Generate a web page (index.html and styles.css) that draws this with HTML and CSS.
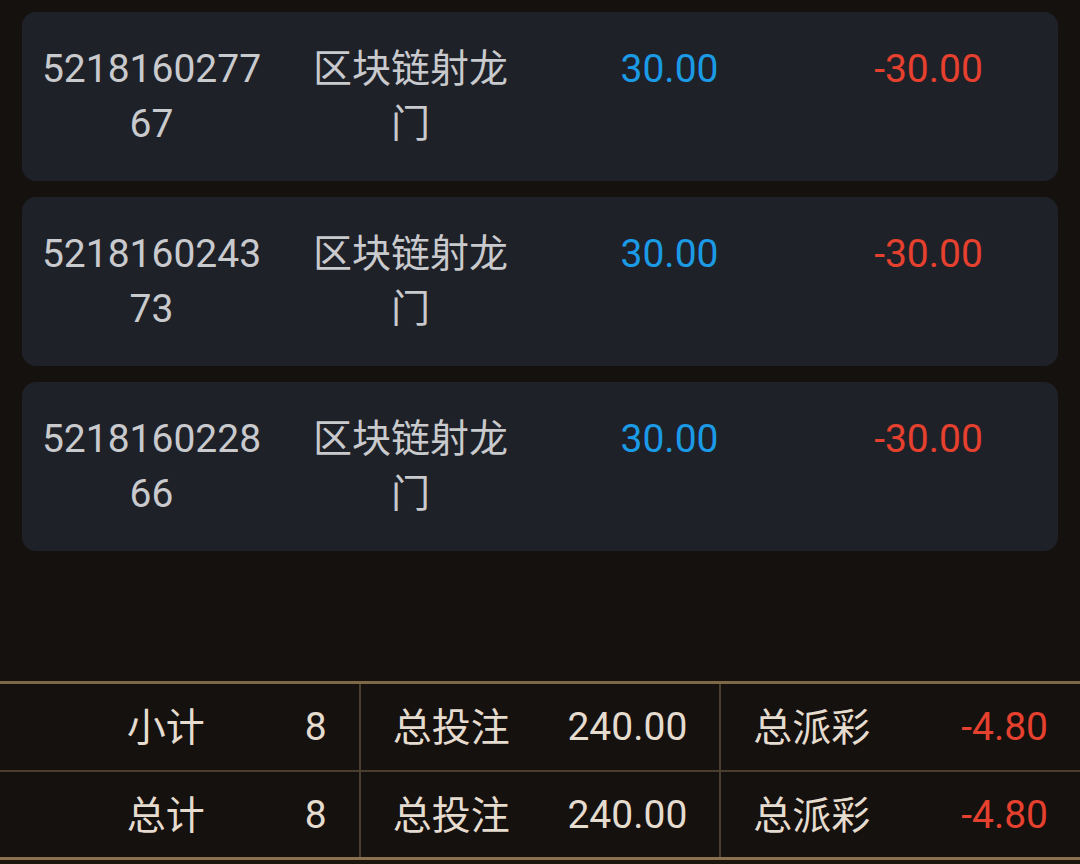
FILE: index.html
```html
<!DOCTYPE html>
<html lang="zh-CN">
<head>
<meta charset="utf-8">
<link rel="stylesheet" href="styles.css">
</head>
<body>
<div class="page">
  <div class="list">
    <div class="card">
      <div class="cell">521816027767</div>
      <div class="cell">区块链射龙门</div>
      <div class="cell blue">30.00</div>
      <div class="cell red">-30.00</div>
    </div>
    <div class="card">
      <div class="cell">521816024373</div>
      <div class="cell">区块链射龙门</div>
      <div class="cell blue">30.00</div>
      <div class="cell red">-30.00</div>
    </div>
    <div class="card">
      <div class="cell">521816022866</div>
      <div class="cell">区块链射龙门</div>
      <div class="cell blue">30.00</div>
      <div class="cell red">-30.00</div>
    </div>
  </div>
  <div class="footer">
    <div class="row">
      <div class="group first"><span class="label">小计</span><span>8</span></div>
      <div class="group"><span class="label">总投注</span><span>240.00</span></div>
      <div class="group"><span class="label">总派彩</span><span class="neg">-4.80</span></div>
    </div>
    <div class="row">
      <div class="group first"><span class="label">总计</span><span>8</span></div>
      <div class="group"><span class="label">总投注</span><span>240.00</span></div>
      <div class="group"><span class="label">总派彩</span><span class="neg">-4.80</span></div>
    </div>
  </div>
</div>
</body>
</html>
```
FILE: styles.css
```css
html, body {
  margin: 0;
  padding: 0;
  background: #15110e;
}
body {
  font-family: Roboto, "Noto Sans CJK SC", sans-serif;
  font-size: 39px;
}
.page {
  height: 864px;
  display: flex;
  flex-direction: column;
  box-sizing: border-box;
  padding-bottom: 4px;
  background: #1d150c;
}
.list {
  background: #15110e;
  flex: 1;
  padding: 12px 22px 0;
  display: flex;
  flex-direction: column;
  gap: 16px;
}
.card {
  background: #1f2128;
  border-radius: 14px;
  display: grid;
  grid-template-columns: repeat(4, 1fr);
  padding: 30px 0 29px;
  height: 110px;
}
.cell {
  padding: 0 16px;
  text-align: center;
  line-height: 55px;
  color: #c9cacd;
  word-break: break-all;
}
.cell.blue { color: #1b9ae6; }
.cell.red { color: #e6402e; }
.footer {
  background: #15110e;
  border-top: 3px solid #7f6846;
  border-bottom: 3px solid #8b7150;
}
.row {
  display: flex;
  height: 86px;
}
.row + .row {
  border-top: 2px solid #4a3e2e;
  height: 85px;
}
.group {
  flex: 1;
  display: flex;
  align-items: center;
  justify-content: space-between;
  padding: 0 32px;
  color: #e5dccf;
}
.label {
  margin-bottom: 6px;
}
.group + .group {
  border-left: 2px solid #4a3e2e;
}
.group.first {
  justify-content: flex-end;
  gap: 100px;
}
.neg { color: #e6402e; }
```
